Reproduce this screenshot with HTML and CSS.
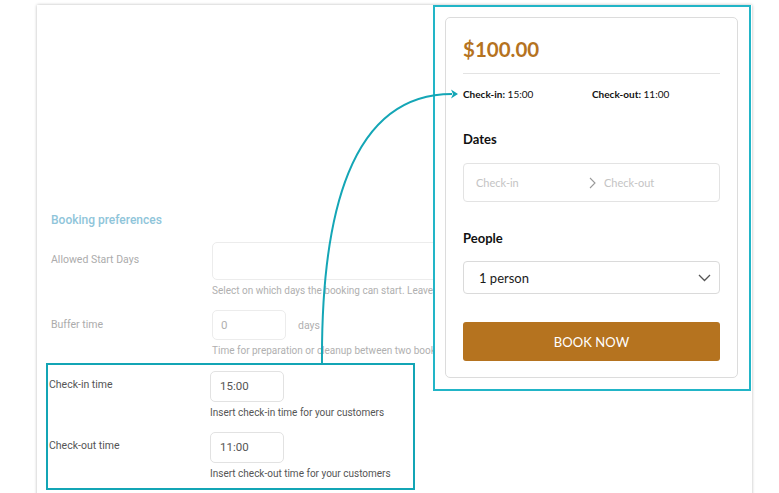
FILE: index.html
```html
<!DOCTYPE html>
<html>
<head>
<meta charset="utf-8">
<link rel="stylesheet" href="styles.css">
</head>
<body>
<div class="panel">
  <div class="form">
    <h3 class="section-title">Booking preferences</h3>
    <div class="row row-days">
      <div class="label">Allowed Start Days</div>
      <div class="field">
        <div class="input input-wide"></div>
        <div class="help">Select on which days the booking can start. Leave empty to allow any day of the week.</div>
      </div>
    </div>
    <div class="row row-buffer">
      <div class="label">Buffer time</div>
      <div class="field">
        <div class="inline">
          <div class="input input-small">0</div>
          <span class="unit">days</span>
        </div>
        <div class="help">Time for preparation or cleanup between two bookings.</div>
      </div>
    </div>
    <div class="highlight">
      <div class="row row-hl">
        <div class="label">Check-in time</div>
        <div class="field">
          <div class="input input-time">15:00</div>
          <div class="help">Insert check-in time for your customers</div>
        </div>
      </div>
      <div class="row row-hl row-hl2">
        <div class="label">Check-out time</div>
        <div class="field">
          <div class="input input-time">11:00</div>
          <div class="help">Insert check-out time for your customers</div>
        </div>
      </div>
    </div>
  </div>

  <div class="preview">
    <div class="card">
      <div class="price">$100.00</div>
      <div class="divider"></div>
      <div class="times">
        <div><b>Check-in:</b> 15:00</div>
        <div><b>Check-out:</b> 11:00</div>
      </div>
      <div class="group-title dates-title">Dates</div>
      <div class="dates">
        <span class="ph ph1">Check-in</span>
        <svg class="chev-r" width="7" height="12" viewBox="0 0 7 12"><path d="M1 1 L6 6 L1 11" fill="none" stroke="#999" stroke-width="1.1"/></svg>
        <span class="ph">Check-out</span>
      </div>
      <div class="group-title people-title">People</div>
      <div class="select">
        <span>1 person</span>
        <svg class="chev-d" width="13" height="8" viewBox="0 0 13 8"><path d="M1 1 L6.5 6.5 L12 1" fill="none" stroke="#555" stroke-width="1.3"/></svg>
      </div>
      <div class="btn">BOOK NOW</div>
    </div>
  </div>
</div>

<svg class="connector" width="779" height="493" viewBox="0 0 779 493">
  <path d="M322 364 C321 215 350 94 452 94" fill="none" stroke="#14a6b6" stroke-width="2"/>
  <path d="M451 89.5 L458 94 L451 98.5 L453 94 Z" fill="#14a6b6"/>
</svg>
</body>
</html>
```

FILE: styles.css
```css
* { box-sizing: border-box; margin: 0; padding: 0; }

html, body {
  width: 779px;
  height: 493px;
  overflow: hidden;
  background: #ffffff;
}

body {
  position: relative;
  font-family: Roboto, "Liberation Sans", sans-serif;
}

.panel {
  position: relative;
  margin: 5px 0 0 37px;
  width: 715px;
  height: 500px;
  background: #ffffff;
  box-shadow: 0 0 3px rgba(0, 0, 0, 0.28);
}

.form {
  padding: 207px 0 0 14px;
}

.section-title {
  font-size: 12px;
  line-height: 16px;
  font-weight: 500;
  color: #8fc5da;
  margin-bottom: 14px;
}

.row {
  display: grid;
  grid-template-columns: 161px 1fr;
  align-items: start;
}

.label {
  font-size: 10.5px;
  line-height: 13px;
  color: #acacac;
}

.row-days .label { padding-top: 11px; }
.row-buffer { margin-top: 13px; }
.row-buffer .label { padding-top: 8px; }

.input {
  border: 1px solid #ececec;
  border-radius: 5px;
  background: #fff;
  font-size: 11.5px;
  color: #b0b0b0;
}

.input-wide {
  width: 240px;
  height: 38px;
}

.input-small {
  width: 74px;
  height: 30px;
  line-height: 28px;
  padding-left: 8px;
}

.inline {
  display: flex;
  align-items: center;
  gap: 12px;
}

.unit {
  font-size: 10.5px;
  color: #b0b0b0;
}

.help {
  margin-top: 5px;
  font-size: 10px;
  line-height: 12px;
  color: #b0b0b0;
  white-space: nowrap;
}

.highlight {
  margin: 6px 0 0 -5px;
  width: 369px;
  height: 127px;
  border: 2px solid #13a5b5;
  padding: 6px 0 0 1px;
}

.row-hl { grid-template-columns: 161px 1fr; }
.row-hl .label {
  color: #555;
  padding-top: 7px;
}
.row-hl2 { margin-top: 13px; }

.input-time {
  width: 74px;
  height: 31px;
  line-height: 29px;
  padding-left: 9px;
  color: #555;
  border-color: #e2e2e2;
}

.row-hl .help { color: #555; margin-top: 5px; }

/* Preview overlay */
.preview {
  position: absolute;
  left: 396px;
  top: 0;
  width: 318px;
  height: 386px;
  border: 2px solid #22b5c7;
  background: #fff;
  padding: 10px;
}

.card {
  width: 293px;
  height: 361px;
  border: 1px solid #dcdcdc;
  border-radius: 5px;
  padding: 18px 17px 0 17px;
  font-family: Lato, "Open Sans", sans-serif;
  color: #111;
}

.price {
  font-size: 20.5px;
  line-height: 26px;
  font-weight: 700;
  color: #b5731f;
}

.divider {
  margin-top: 11px;
  height: 1px;
  background: #e3e3e3;
}

.times {
  display: grid;
  grid-template-columns: 129px auto;
  margin-top: 13px;
  font-size: 10px;
  line-height: 14px;
  color: #111;
}

.times b { font-weight: 700; }

.group-title {
  font-size: 13px;
  line-height: 16px;
  font-weight: 700;
  color: #111;
}

.dates-title { margin-top: 30px; }

.dates {
  margin-top: 16px;
  height: 39px;
  border: 1px solid #e3e3e3;
  border-radius: 4px;
  display: flex;
  align-items: center;
  padding-left: 12px;
  font-size: 11px;
  color: #c4c4c4;
}

.ph1 { width: 113px; }
.chev-r { margin-right: 8px; }

.people-title { margin-top: 28px; }

.select {
  margin-top: 15px;
  height: 33px;
  border: 1px solid #dadada;
  border-radius: 4px;
  display: flex;
  align-items: center;
  justify-content: space-between;
  padding: 0 8px 0 15px;
  font-size: 13px;
  color: #1a1a1a;
}

.btn {
  margin-top: 28px;
  height: 39px;
  background: #b5731f;
  border-radius: 3px;
  color: #fff;
  font-size: 13px;
  font-weight: 400;
  display: flex;
  align-items: center;
  justify-content: center;
  letter-spacing: 0.1px;
}

.connector {
  position: absolute;
  left: 0;
  top: 0;
  pointer-events: none;
}
```
